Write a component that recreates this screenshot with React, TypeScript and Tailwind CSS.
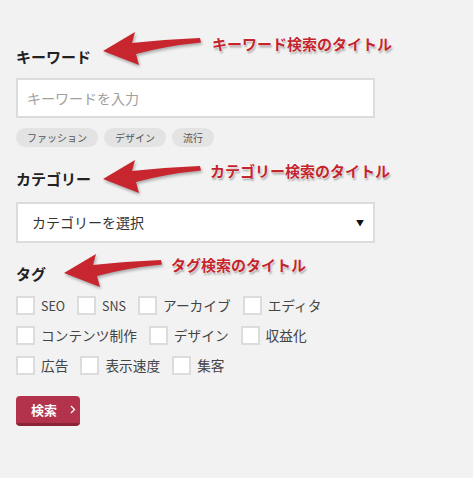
import React from 'react';

const jp = { fontFamily: '"Noto Sans CJK JP", "Noto Sans", sans-serif' };

const tagRows: string[][] = [
  ['SEO', 'SNS', 'アーカイブ', 'エディタ'],
  ['コンテンツ制作', 'デザイン', '収益化'],
  ['広告', '表示速度', '集客'],
];

const popular = ['ファッション', 'デザイン', '流行'];

// red annotation arrow, tip at the left edge (y = 20)
const Arrow: React.FC<{ className: string }> = ({ className }) => (
  <svg
    width="100"
    height="36"
    viewBox="0 0 100 36"
    className={`absolute overflow-visible drop-shadow-[1px_2px_1.5px_rgba(0,0,0,0.3)] ${className}`}
  >
    <path d="M0,20 L32,1 L29,12 Q60,8.5 97,7 L98,11.5 Q62,15 33,23 L36,34 Z" fill="#c8262f" />
  </svg>
);

const Note: React.FC<{ text: string; className: string }> = ({ text, className }) => (
  <div
    className={`absolute text-[15px] leading-[20px] font-bold text-[#c4252d] whitespace-nowrap [text-shadow:0_0_2px_#fff,0_0_2px_#fff,1px_2px_2px_rgba(0,0,0,0.35)] ${className}`}
    style={jp}
  >
    {text}
  </div>
);

export default function App() {
  return (
    <div className="relative w-[473px] h-[478px] bg-[#f2f2f2] overflow-hidden" style={jp}>
      <div className="w-[359px] ml-4 pt-[46px] flex flex-col">
        {/* Keyword */}
        <h3 className="text-[15px] leading-[22px] font-bold text-[#222]">キーワード</h3>
        <input
          className="mt-[10px] h-[40px] w-full bg-white border-2 border-[#dcdcdc] pl-[9px] text-[14px] text-[#333] placeholder:text-[#a0a0a0] outline-none"
          placeholder="キーワードを入力"
          style={jp}
        />
        <div className="mt-[10px] flex gap-[6px]">
          {popular.map((p) => (
            <span
              key={p}
              className="h-[19px] px-[11px] rounded-full bg-[#e3e3e3] text-[10px] leading-[19px] text-[#555]"
            >
              {p}
            </span>
          ))}
        </div>

        {/* Category */}
        <h3 className="mt-[21px] text-[15px] leading-[22px] font-bold text-[#222]">カテゴリー</h3>
        <div className="mt-[12px] h-[41px] w-full bg-white border-2 border-[#dcdcdc] pl-[14px] pr-[9px] flex items-center justify-between">
          <span className="text-[14px] text-[#333]">カテゴリーを選択</span>
          <span className="text-[8px] text-[#111]">▼</span>
        </div>

        {/* Tags */}
        <h3 className="mt-[20px] text-[15px] leading-[22px] font-bold text-[#222]">タグ</h3>
        <div className="mt-[11px] flex flex-col gap-[11px]">
          {tagRows.map((row, i) => (
            <div key={i} className="flex items-center">
              {row.map((t) => (
                <label key={t} className="flex items-center mr-[12px]">
                  <span className="w-[19px] h-[19px] bg-white border-2 border-[#dcdcdc]" />
                  <span
                    className={`ml-[6px] leading-[19px] text-[#444] ${
                      /^[A-Z]+$/.test(t) ? 'text-[12.5px]' : 'text-[13.7px]'
                    }`}
                  >
                    {t}
                  </span>
                </label>
              ))}
            </div>
          ))}
        </div>

        <div className="mt-[21px]">
          <button
            className="h-[30px] w-[64px] rounded-[4px] bg-[#b3334d] border-b-[3px] border-[#8c2337] flex items-center pl-[15px] text-white"
            style={jp}
          >
            <span className="text-[13px] font-bold">検索</span>
            <svg width="6" height="9" viewBox="0 0 6 9" className="ml-[13px]">
              <path d="M1,1 L4.5,4.5 L1,8" fill="none" stroke="#fff" strokeWidth="1.3" />
            </svg>
          </button>
        </div>
      </div>

      {/* annotations */}
      <Arrow className="left-[103px] top-[31px]" />
      <Note text="キーワード検索のタイトル" className="left-[212px] top-[34px]" />
      <Arrow className="left-[103px] top-[159px]" />
      <Note text="カテゴリー検索のタイトル" className="left-[210px] top-[161px]" />
      <Arrow className="left-[64px] top-[253px]" />
      <Note text="タグ検索のタイトル" className="left-[171px] top-[255px]" />
    </div>
  );
}
